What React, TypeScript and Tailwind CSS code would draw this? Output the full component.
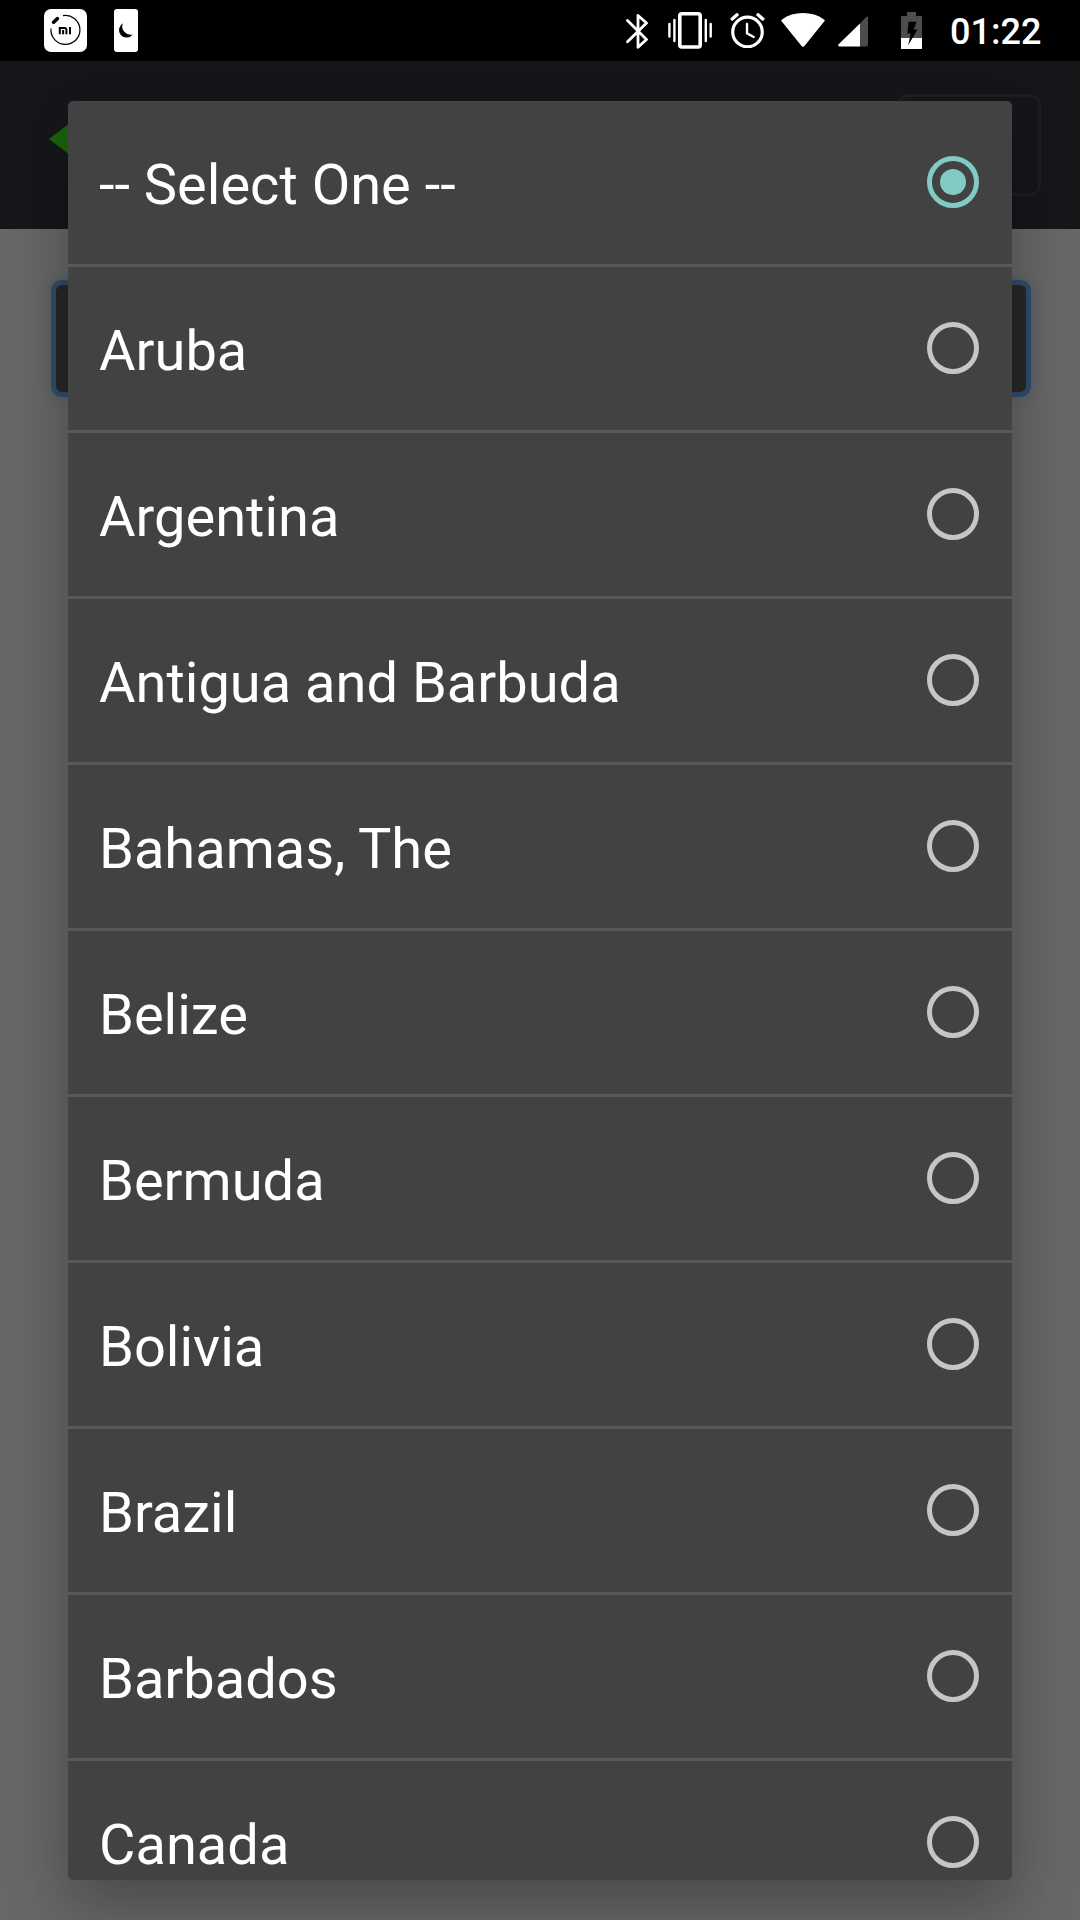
const countries = [
  '-- Select One --',
  'Aruba',
  'Argentina',
  'Antigua and Barbuda',
  'Bahamas, The',
  'Belize',
  'Bermuda',
  'Bolivia',
  'Brazil',
  'Barbados',
  'Canada',
];

function MiIcon() {
  return (
    <svg className="h-[43px] w-[43px]" viewBox="0 0 43 43" fill="none">
      <rect width="43" height="43" rx="7" fill="#fff" />
      <path d="M19 6.6A14.5 14.5 0 1 1 7 19.5" stroke="#000" strokeWidth="1.2" />
      <path d="M9.6 13.2L13.4 9.6" stroke="#000" strokeWidth="3.6" strokeLinecap="round" />
      <path
        d="M15.8 25.2V18.9H20.4Q22.4 18.9 22.4 20.9V25.2M19.1 21V25.2M26 18V25.2"
        stroke="#000"
        strokeWidth="2"
      />
    </svg>
  );
}

function NightIcon() {
  return (
    <svg className="h-[43px] w-6" viewBox="0 0 24 43">
      <rect width="24" height="43" rx="3" fill="#fff" />
      <path d="M9 14.2A7.6 7.6 0 1 0 18.7 25.4A8.2 8.2 0 0 1 9 14.2Z" fill="#000" />
    </svg>
  );
}

function BluetoothIcon() {
  return (
    <svg className="h-9 w-6" viewBox="0 0 24 36" fill="none" stroke="#fff" strokeWidth="2.8" strokeLinecap="round" strokeLinejoin="round">
      <path d="M2.5 7.5L21.5 26.5L13 34.2V2.5L21.5 10L2.5 28.8" />
    </svg>
  );
}

function VibrateIcon() {
  return (
    <svg className="h-[37px] w-11" viewBox="0 0 44 37" fill="none" stroke="#fff" strokeLinecap="round">
      <rect x="11.8" y="1.8" width="20.4" height="33.2" rx="2" strokeWidth="3.6" />
      <path d="M1.4 12V24.6M6.4 8V29M37.8 8V29M42.7 12V24.6" strokeWidth="2.4" />
    </svg>
  );
}

function AlarmIcon() {
  return (
    <svg className="h-9 w-[35px]" viewBox="0 0 35 36" fill="none" stroke="#fff" strokeLinecap="round">
      <circle cx="17.5" cy="20" r="14.8" strokeWidth="3.2" />
      <path d="M2.2 7L7 2.8M32.8 7L28 2.8" strokeWidth="3.4" />
      <path d="M17 12V21.2L23.7 25" strokeWidth="2.4" />
    </svg>
  );
}

function WifiIcon() {
  return (
    <svg className="h-[34px] w-11" viewBox="0 0 44 34">
      <path d="M0.6 8.3Q-0.2 7.2 1 6.4Q10 0 22 0T43 6.4Q44.2 7.2 43.4 8.3L23.2 33.2Q22 34.4 20.8 33.2Z" fill="#fff" />
    </svg>
  );
}

function SignalIcon() {
  return (
    <svg className="h-[31px] w-[30px]" viewBox="0 0 30 31">
      <path d="M22 7.6L28 1.2Q30 -0.4 30 2V28.5Q30 30.5 28 30.5H22Z" fill="#4d4d4d" />
      <path d="M22 7.4V30.5H1.5Q-0.6 30.2 0.6 28.3Z" fill="#fff" />
    </svg>
  );
}

function BatteryIcon() {
  return (
    <svg className="h-[37px] w-[21px]" viewBox="0 0 21 37">
      <path d="M6 0H15V4H21V26H0V4H6Z" fill="#4d4d4d" />
      <path d="M0 26H21V37H0Z" fill="#fff" />
      <path d="M7.5 9.8H15.6L12.8 17.5H16.5L7.2 33.2L9.7 21.5H6.3Z" fill="#000" />
    </svg>
  );
}

function StatusBar() {
  return (
    <header className="flex h-[61px] shrink-0 items-start bg-black pl-11 pt-[9px]">
      <MiIcon />
      <div className="ml-[27px]">
        <NightIcon />
      </div>
      <div className="ml-[487px] mt-[4px]">
        <BluetoothIcon />
      </div>
      <div className="ml-[19px] mt-[3px]">
        <VibrateIcon />
      </div>
      <div className="ml-[18px] mt-[3px]">
        <AlarmIcon />
      </div>
      <div className="ml-[16px] mt-[4px]">
        <WifiIcon />
      </div>
      <div className="ml-[13px] mt-[7px]">
        <SignalIcon />
      </div>
      <div className="ml-[33px] mt-[3px]">
        <BatteryIcon />
      </div>
      <span className="ml-[28px] mt-[2px] text-[36px] font-medium leading-[43px] text-white">01:22</span>
    </header>
  );
}

function Radio({ checked }: { checked: boolean }) {
  return (
    <span
      className={
        checked
          ? 'mb-[2px] flex h-[52px] w-[52px] items-center justify-center rounded-full border-[5px] border-[#80cbc4]'
          : 'mb-[2px] flex h-[52px] w-[52px] items-center justify-center rounded-full border-[5px] border-[#c6c6c6]'
      }
    >
      {checked && <span className="h-[26px] w-[26px] rounded-full bg-[#80cbc4]" />}
    </span>
  );
}

export default function App() {
  return (
    <div className="relative flex h-[1920px] w-[1080px] flex-col overflow-hidden bg-[#686868] font-['Roboto',sans-serif]">
      <StatusBar />
      <div className="flex h-[168px] shrink-0 items-start justify-between bg-[#16171b] pl-[49px] pr-[39px] pt-[33px]">
        <svg className="mt-[22px] h-[46px] w-[30px]" viewBox="0 0 30 46">
          <path d="M0 23L30 0V46Z" fill="#1a650c" />
        </svg>
        <div className="h-[102px] w-[143px] rounded-[10px] border-[3px] border-[#1e1f23]" />
      </div>
      <div className="ml-[51px] mt-[51px] h-[117px] w-[980px] shrink-0 rounded-[11px] border-[5px] border-[#324d6b] bg-[#282828] shadow-[0_0_12px_rgba(46,74,105,0.4)]" />

      <ul className="absolute left-[68px] top-[101px] h-[1779px] w-[944px] divide-y-[3px] divide-[#595959] overflow-hidden rounded-[5px] bg-[#424242] shadow-[0_34px_70px_rgba(0,0,0,0.22),0_8px_46px_rgba(0,0,0,0.1)]">
        {countries.map((name, index) => (
          <li
            key={name}
            className="box-content flex h-[163px] items-center justify-between pl-[31px] pr-[33px]"
          >
            <span className="mt-[4px] whitespace-nowrap text-[56px] leading-[66px] text-white">{name}</span>
            <Radio checked={index === 0} />
          </li>
        ))}
      </ul>
    </div>
  );
}
